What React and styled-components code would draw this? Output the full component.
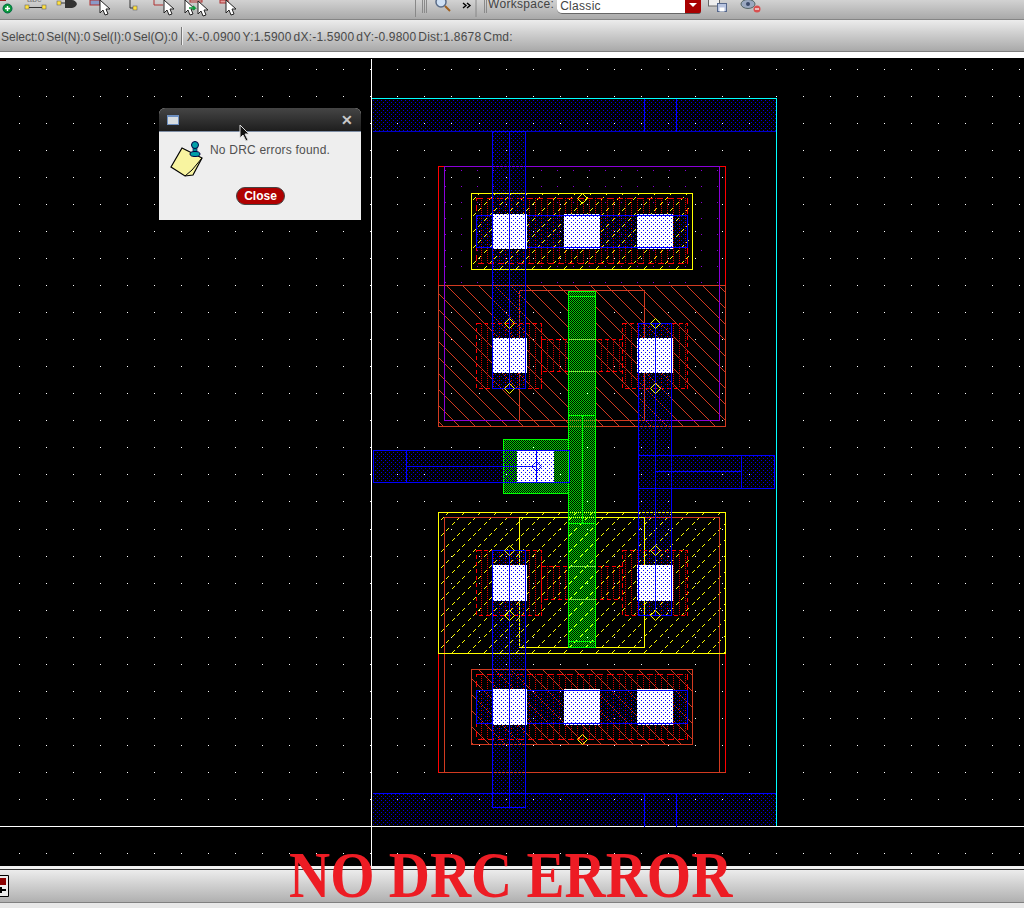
import styled, { createGlobalStyle } from 'styled-components';

const GlobalStyle = createGlobalStyle`
  html, body { margin: 0; padding: 0; background: #e8e8e8; }
  body { font-family: "Liberation Sans", Arial, sans-serif; }
`;

const Page = styled.div`
  position: relative;
  width: 1024px;
  height: 908px;
  overflow: hidden;
  display: flex;
  flex-direction: column;
`;

/* top toolbar, cut off by the top of the window */
const Toolbar = styled.div`
  height: 19px;
  flex: none;
  display: flex;
  align-items: flex-start;
  background: linear-gradient(#d2d2d2, #a9a9a9);
  border-bottom: 1px solid #858585;
`;

const ToolIcons = styled.svg`
  flex: none;
  display: block;
`;

const Workspace = styled.div`
  display: flex;
  align-items: flex-start;
  color: #444;
  font-size: 12px;
  letter-spacing: 0.3px;
  line-height: 12px;
  margin-top: -2px;
`;

const Combo = styled.div`
  width: 128px;
  height: 16px;
  margin-left: 3px;
  padding: 2px 0 0 3px;
  box-sizing: border-box;
  background: #fff;
  border-radius: 0 0 0 5px;
  border-bottom: 1px solid #666;
`;

const ComboArrow = styled.div`
  width: 16px;
  height: 14px;
  background: #a80000;
  border-bottom: 1px solid #555;
  border-radius: 0 0 3px 0;
  display: flex;
  justify-content: center;
  padding-top: 3px;
  box-sizing: border-box;
  &::after {
    content: "";
    border-left: 4px solid transparent;
    border-right: 4px solid transparent;
    border-top: 4px solid #fff;
    height: 0;
  }
`;

const StatusBar = styled.div`
  height: 32px;
  flex: none;
  display: flex;
  align-items: center;
  padding: 2px 0 0 1px;
  box-sizing: border-box;
  color: #4a4a4a;
  font-size: 12px;
  background: linear-gradient(#ececec, #a9a9a9);
  border-bottom: 1px solid #808080;
`;

const StatusGroup = styled.div`
  display: flex;
  gap: 2px;
  letter-spacing: ${(p) => (p.$wide ? '0.2px' : '0')};
`;

const Divider = styled.div`
  width: 1px;
  height: 18px;
  margin: -2px 4px 0 3px;
  background: #777;
  border-right: 1px solid #eee;
`;

const Gap = styled.div`
  height: 6px;
  flex: none;
  background: #fff;
`;

const Canvas = styled.svg`
  display: block;
  flex: none;
  width: 1024px;
  height: 808px;
  background: #000;
`;

const BottomEdge = styled.div`
  height: 4px;
  flex: none;
  box-sizing: border-box;
  background: #f2f2f2;
  border-bottom: 1px solid #333;
`;

const BottomBar = styled.div`
  height: 33px;
  flex: none;
  display: flex;
  align-items: center;
  box-sizing: border-box;
  background: linear-gradient(#ececec, #b0b0b0);
  border-bottom: 1px solid #808080;
`;

const Footer = styled.div`
  flex: 1;
  background: #e8e8e8;
`;

/* the DRC result window over the canvas */
const Dialog = styled.div`
  position: absolute;
  left: 159px;
  top: 108px;
  width: 202px;
  height: 112px;
  background: #eeeeee;
  border-radius: 6px 6px 0 0;
`;

const DialogHead = styled.div`
  height: 24px;
  display: flex;
  align-items: center;
  justify-content: space-between;
  padding: 0 8px;
  box-sizing: border-box;
  border-radius: 6px 6px 0 0;
  background: linear-gradient(#454545, #1e1e1e);
  border-bottom: 1px solid #7e8ea5;
`;

const WinIcon = styled.div`
  width: 12px;
  height: 10px;
  background: #d8dde0;
  border: 1px solid #6d8fc0;
  border-top-width: 2px;
  box-sizing: border-box;
`;

const CloseX = styled.span`
  color: #c8c8c8;
  font-size: 14px;
  font-weight: bold;
  line-height: 14px;
`;

const DialogBody = styled.div`
  display: flex;
  padding: 9px 0 0 11px;
  gap: 7px;
  color: #505050;
  font-size: 12px;
  letter-spacing: 0.2px;
`;

const DialogText = styled.div`
  line-height: 14px;
  margin-top: 2px;
`;

const NoteIcon = styled.svg`
  flex: none;
  overflow: visible;
`;

const CloseButton = styled.button`
  position: absolute;
  left: 77px;
  top: 79px;
  width: 49px;
  height: 18px;
  padding: 0;
  border: 1px solid #444;
  border-radius: 9px;
  background: #b00000;
  color: #fff;
  font: bold 12px "Liberation Sans", Arial, sans-serif;
`;

const Pointer = styled.svg`
  position: absolute;
  left: 239px;
  top: 124px;
`;

const Banner = styled.div`
  position: absolute;
  left: 289px;
  top: 838px;
  color: #ed1c24;
  font-family: "Liberation Serif", "Times New Roman", serif;
  font-weight: bold;
  font-size: 65px;
  line-height: 75px;
  white-space: nowrap;
  transform: scaleX(0.877);
  transform-origin: left center;
`;

const BLUE = '#0000ff';
const RED = '#ff0000';
const ORANGE = '#d23a20';
const YELLOW = '#ffff00';
const GREEN = '#00ff00';
const PURPLE = '#8a00d8';

// outlined box on whole pixels, so it stays as sharp as the layout editor draws it
const Box = ({ x, y, x2, y2, c, fill = 'none', w = 1, dash }) => (
  <rect x={x + 0.5} y={y + 0.5} width={x2 - x} height={y2 - y} fill={fill} stroke={c} strokeWidth={w} strokeDasharray={dash} />
);

const Line = ({ x, y, x2, y2, c, w = 1, dash }) => (
  <line x1={x + 0.5} y1={y + 0.5} x2={x2 + 0.5} y2={y2 + 0.5} stroke={c} strokeWidth={w} strokeDasharray={dash} />
);

const Contact = ({ x, y, x2, y2 }) => (
  <rect x={x} y={y} width={x2 - x} height={y2 - y} fill="url(#contact)" />
);

const Pin = ({ x, y, c = YELLOW }) => (
  <path d={`M${x} ${y - 5}L${x + 5} ${y}L${x} ${y + 5}L${x - 5} ${y}Z`} fill="none" stroke={c} strokeWidth="1" shapeRendering="auto" />
);

const Cursor = ({ x, y }) => (
  <path transform={`translate(${x} ${y})`} d="M0 0v13l3-3 2 5 3-1-2-5h4z" fill="#fff" stroke="#222" strokeWidth="1" />
);

const gridDots = () => {
  let d = '';
  for (let i = 0; i < 38; i++) {
    for (let j = 0; j < 30; j++) {
      const x = Math.round(19 + 27.03 * i);
      const y = Math.round(69 + 27.03 * j);
      d += `M${x} ${y}h1v1h-1z`;
    }
  }
  return d;
};

const purpleDots = () => {
  let d = '';
  for (let x = 445; x < 720; x += 16) {
    for (let y = 170; y < 285; y += 16) d += `M${x} ${y}h1v1h-1z`;
  }
  return d;
};

// yellow hatch as short stair steps, 16px apart
const YELLOW_STEPS = [0, 1, 2, 5, 6, 7, 10, 11, 12];

const Defs = () => (
  <defs>
    <pattern id="metal" width="4" height="4" patternUnits="userSpaceOnUse">
      <rect x="1" y="0" width="1" height="1" fill="#0000e0" />
      <rect x="3" y="2" width="1" height="1" fill="#0000e0" />
    </pattern>
    <pattern id="poly" width="2" height="2" patternUnits="userSpaceOnUse">
      <rect x="1" y="0" width="1" height="1" fill="#00d800" />
      <rect x="0" y="1" width="1" height="1" fill="#00d800" />
    </pattern>
    <pattern id="active" width="6" height="4" patternUnits="userSpaceOnUse">
      <rect x="1" y="0" width="1" height="1" fill="#e00000" />
      <rect x="1" y="2" width="1" height="1" fill="#e00000" />
    </pattern>
    <pattern id="contact" width="4" height="4" patternUnits="userSpaceOnUse">
      <rect width="4" height="4" fill="#fff" />
      <rect x="1" y="0" width="1" height="1" fill={BLUE} />
      <rect x="3" y="2" width="1" height="1" fill={BLUE} />
    </pattern>
    <pattern id="hatchOrange" width="16" height="16" patternUnits="userSpaceOnUse" patternTransform="translate(1 0)">
      <path d="M0 0L16 16" stroke={ORANGE} strokeWidth="1" />
    </pattern>
    <pattern id="hatchYellow" width="16" height="16" patternUnits="userSpaceOnUse">
      {YELLOW_STEPS.map((t) => (
        <rect key={t} x={(16 - t) % 16} y={t} width="1" height="1" fill={YELLOW} />
      ))}
    </pattern>
  </defs>
);

// a transistor's source, channel and drain diffusion with its two contacts
const Device = ({ top, bottom, midTop, midBottom, conTop, conBottom }) => (
  <>
    <rect x="476" y={top} width="66" height={bottom - top} fill="url(#active)" />
    <rect x="622" y={top} width="66" height={bottom - top} fill="url(#active)" />
    <rect x="542" y={midTop} width="80" height={midBottom - midTop} fill="url(#active)" />
    <Box x={476} y={top} x2={541} y2={bottom} c={RED} dash="4 3" />
    <Box x={622} y={top} x2={687} y2={bottom} c={RED} dash="4 3" />
    <Box x={541} y={midTop} x2={622} y2={midBottom} c={RED} dash="4 3" />
    <Contact x={492} y={conTop} x2={527} y2={conBottom} />
    <Contact x={637} y={conTop} x2={673} y2={conBottom} />
  </>
);

// substrate tap: diffusion strip, metal strap and three contacts
const Tap = ({ top, bottom, dashTop, dashBottom, metalTop, metalBottom, pinY, c, hatch }) => (
  <>
    <rect x="471" y={top} width="222" height={bottom - top} fill={`url(#${hatch})`} />
    <rect x="476" y={dashTop} width="212" height={dashBottom - dashTop} fill="url(#active)" />
    <rect x="476" y={metalTop} width="212" height={metalBottom - metalTop} fill="url(#metal)" />
    <Box x={471} y={top} x2={692} y2={bottom} c={c} />
    <Box x={476} y={dashTop} x2={687} y2={dashBottom} c={RED} dash="6 4" />
    <Contact x={492} y={metalTop - 1} x2={527} y2={metalBottom + 2} />
    <Contact x={564} y={metalTop - 1} x2={600} y2={metalBottom + 2} />
    <Contact x={637} y={metalTop - 1} x2={673} y2={metalBottom + 2} />
    <Box x={476} y={metalTop} x2={687} y2={metalBottom} c={BLUE} />
    <Pin x={582.5} y={pinY} />
  </>
);

const Layout = () => (
  <g shapeRendering="crispEdges">
    <path d={gridDots()} fill="#fff" />

    {/* axes */}
    <Line x={371} y={58} x2={371} y2={866} c="#fff" />
    <Line x={-1} y={826} x2={1024} y2={826} c="#fff" />

    {/* power rails */}
    <rect x="372" y="98" width="404" height="33" fill="url(#metal)" />
    <rect x="372" y="793" width="404" height="33" fill="url(#metal)" />
    <Line x={372} y={131} x2={776} y2={131} c="#0000c8" />
    <Line x={372} y={793} x2={776} y2={793} c={BLUE} />
    <Line x={644} y={98} x2={644} y2={131} c={BLUE} />
    <Line x={676} y={98} x2={676} y2={131} c={BLUE} />
    <Line x={644} y={793} x2={644} y2={826} c={BLUE} />
    <Line x={676} y={793} x2={676} y2={826} c={BLUE} />

    {/* upper device: well and hatch */}
    <path d={purpleDots()} fill={PURPLE} />
    <rect x="438" y="285" width="288" height="141" fill="url(#hatchOrange)" />
    <Box x={438} y={166} x2={725} y2={285} c={RED} />
    <Box x={438} y={285} x2={725} y2={426} c={ORANGE} />
    <Box x={444} y={166} x2={719} y2={420} c={PURPLE} />
    <Box x={519} y={290} x2={644} y2={420} c={ORANGE} />

    {/* lower device: well and hatch */}
    <rect x="438" y="512" width="288" height="141" fill="url(#hatchYellow)" />
    <Line x={438} y={653} x2={438} y2={772} c={RED} />
    <Line x={725} y={653} x2={725} y2={772} c={RED} />
    <Line x={438} y={772} x2={725} y2={772} c={ORANGE} />
    <Box x={444} y={517} x2={719} y2={772} c={ORANGE} />
    <Box x={438} y={512} x2={725} y2={653} c={YELLOW} />
    <Box x={519} y={517} x2={644} y2={647} c={YELLOW} />

    <Tap top={193} bottom={269} dashTop={198} dashBottom={263} metalTop={215} metalBottom={247} pinY={198.5} c={YELLOW} hatch="hatchYellow" />
    <Tap top={669} bottom={744} dashTop={674} dashBottom={739} metalTop={690} metalBottom={723} pinY={739.5} c={ORANGE} hatch="hatchOrange" />

    <Device top={323} bottom={388} midTop={339} midBottom={371} conTop={338} conBottom={373} />
    <Device top={550} bottom={615} midTop={566} midBottom={599} conTop={565} conBottom={601} />

    {/* poly gate with its contact */}
    <rect x="503" y="439" width="65" height="55" fill="url(#poly)" />
    <Box x={503} y={439} x2={568} y2={493} c={GREEN} />
    <rect x="568" y="291" width="28" height="356" fill="url(#poly)" />
    <Box x={568} y={291} x2={595} y2={647} c={GREEN} />
    <Line x={568} y={296} x2={595} y2={296} c={GREEN} />
    <Line x={568} y={415} x2={595} y2={415} c={GREEN} />
    <Line x={568} y={523} x2={595} y2={523} c={GREEN} />
    <Line x={568} y={641} x2={595} y2={641} c={GREEN} />
    <Line x={582} y={415} x2={582} y2={523} c={GREEN} />
    <Line x={568} y={339} x2={595} y2={339} c="#80e040" />
    <Line x={568} y={371} x2={595} y2={371} c="#80e040" />
    <Line x={568} y={566} x2={595} y2={566} c="#80e040" />
    <Line x={568} y={599} x2={595} y2={599} c="#80e040" />
    <Contact x={517} y={450} x2={554} y2={483} />

    {/* metal columns */}
    <rect x="492" y="131" width="34" height="258" fill="url(#metal)" />
    <rect x="492" y="550" width="34" height="258" fill="url(#metal)" />
    <rect x="638" y="323" width="34" height="293" fill="url(#metal)" />
    <Contact x={492} y={214} x2={527} y2={248} />
    <Contact x={492} y={338} x2={527} y2={373} />
    <Contact x={492} y={565} x2={527} y2={601} />
    <Contact x={492} y={689} x2={527} y2={724} />
    <Contact x={637} y={338} x2={673} y2={373} />
    <Contact x={637} y={565} x2={673} y2={601} />
    <Box x={492} y={131} x2={525} y2={388} c={BLUE} />
    <Line x={509} y={131} x2={509} y2={388} c={BLUE} />
    <Box x={492} y={550} x2={525} y2={807} c={BLUE} />
    <Line x={509} y={550} x2={509} y2={807} c={BLUE} />
    <Box x={638} y={323} x2={671} y2={615} c={BLUE} />
    <Line x={655} y={323} x2={655} y2={615} c={BLUE} />
    <Pin x={509.5} y={323.5} />
    <Pin x={509.5} y={388.5} />
    <Pin x={655.5} y={323.5} />
    <Pin x={655.5} y={388.5} />
    <Pin x={509.5} y={550.5} />
    <Pin x={509.5} y={615.5} />
    <Pin x={655.5} y={550.5} />
    <Pin x={655.5} y={615.5} />

    {/* gate and output straps */}
    <rect x="373" y="450" width="145" height="33" fill="url(#metal)" />
    <rect x="639" y="455" width="136" height="33" fill="url(#metal)" />
    <Box x={373} y={450} x2={569} y2={482} c={BLUE} />
    <Line x={406} y={450} x2={406} y2={482} c={BLUE} />
    <Line x={406} y={466} x2={536} y2={466} c={BLUE} />
    <Line x={536} y={450} x2={536} y2={482} c={BLUE} />
    <Pin x={536.5} y={466.5} c={BLUE} />
    <Box x={638} y={455} x2={774} y2={488} c={BLUE} />
    <Line x={741} y={455} x2={741} y2={488} c={BLUE} />
    <Line x={655} y={471} x2={741} y2={471} c={BLUE} />

    {/* cell boundary */}
    <path d="M372 98.5H776.5V826" fill="none" stroke="#00ffff" />
  </g>
);

const LeftTools = () => (
  <ToolIcons width="415" height="19" viewBox="0 0 415 19">
    <circle cx="7.5" cy="8.5" r="4.5" fill="#0a9a3a" stroke="#064" />
    <path d="M5 8.5h5M7.5 6v5" stroke="#fff" strokeWidth="1.5" />
    <path d="M0 0h6v1H0z" fill="#a02020" />
    <text x="27" y="2" fontSize="9" fill="#777" fontFamily="Liberation Sans">abc</text>
    <path d="M27 7.5h17" stroke="#333" />
    <rect x="25" y="5" width="4" height="4" fill="#ffe040" stroke="#555" strokeWidth="0.5" />
    <rect x="42" y="5" width="4" height="4" fill="#ffe040" stroke="#555" strokeWidth="0.5" />
    <path d="M57 3h10" stroke="#333" />
    <rect x="57" y="1" width="4" height="4" fill="#ffe040" stroke="#555" strokeWidth="0.5" />
    <path d="M65 0h7a6 8 0 0 1 5 4 6 6 0 0 1-5 4h-7z" fill="#333" />
    <rect x="90" y="0" width="10" height="5" fill="#8a9ac8" stroke="#b03030" />
    <Cursor x={100} y={0} />
    <path d="M130 0v8h4" fill="none" stroke="#333" />
    <rect x="133" y="6" width="4" height="4" fill="#ffe040" stroke="#555" strokeWidth="0.5" />
    <path d="M154 0v5h9" fill="none" stroke="#b03030" />
    <Cursor x={164} y={0} />
    <rect x="190" y="0" width="12" height="2" fill="none" stroke="#b03030" />
    <Cursor x={185} y={0} />
    <Cursor x={198} y={1} />
    <path d="M189 8h6l-2-2M195 8l-2 2" fill="none" stroke="#0a9a3a" strokeWidth="1.5" />
    <rect x="220" y="0" width="8" height="3" fill="#e0a0a0" stroke="#b03030" />
    <Cursor x={226} y={0} />
  </ToolIcons>
);

const SearchTools = () => (
  <ToolIcons width="73" height="19" viewBox="0 0 73 19">
    <path d="M0 0v17h1V0z" fill="#888" />
    <path d="M7.5 0v13M9.5 0v13M11.5 0v13" stroke="#8a8a8a" />
    <circle cx="26" cy="2" r="5" fill="#cfe0f4" stroke="#5a6c88" strokeWidth="1.5" />
    <path d="M30 6l5 5" stroke="#a06020" strokeWidth="2" />
    <path d="M48 3l3 2.5-3 2.5M52 3l3 2.5-3 2.5" fill="none" stroke="#000" strokeWidth="1.4" />
    <path d="M61 0v17" stroke="#888" />
    <path d="M69.5 0v13M71.5 0v13" stroke="#8a8a8a" />
  </ToolIcons>
);

const RightTools = () => (
  <ToolIcons width="70" height="19" viewBox="0 0 70 19">
    <rect x="7.5" y="-1" width="11" height="7" fill="#eee" stroke="#666" />
    <rect x="16.5" y="3.5" width="9" height="8" fill="#b8c4e0" stroke="#56688c" />
    <rect x="18.5" y="7.5" width="5" height="4" fill="#fff" />
    <ellipse cx="47" cy="4" rx="7" ry="4.5" fill="#9aa8c0" stroke="#566" />
    <circle cx="47" cy="4" r="2" fill="#3a4a6a" />
    <circle cx="56" cy="9" r="3.5" fill="#d85050" />
    <path d="M54 9h4" stroke="#fff" strokeWidth="1.2" />
  </ToolIcons>
);

const App = () => (
  <Page>
    <GlobalStyle />
    <Toolbar>
      <LeftTools />
      <SearchTools />
      <Workspace>Workspace:<Combo>Classic</Combo></Workspace>
      <ComboArrow />
      <RightTools />
    </Toolbar>
    <StatusBar>
      <StatusGroup>
        <span>Select:0</span>
        <span>Sel(N):0</span>
        <span>Sel(I):0</span>
        <span>Sel(O):0</span>
      </StatusGroup>
      <Divider />
      <StatusGroup $wide>
        <span>X:-0.0900</span>
        <span>Y:1.5900</span>
        <span>dX:-1.5900</span>
        <span>dY:-0.9800</span>
        <span>Dist:1.8678</span>
        <span>Cmd:</span>
      </StatusGroup>
    </StatusBar>
    <Gap />
    <Canvas viewBox="0 58 1024 808">
      <Defs />
      <Layout />
    </Canvas>
    <BottomEdge />
    <BottomBar>
      <svg width="9" height="22" viewBox="0 0 9 22">
        <path d="M0 .5H8.5V21.5H0" fill="#ececec" stroke="#000" />
        <rect x="0" y="3" width="6" height="7" fill="#8a0000" />
        <path d="M0 12h2v6H0zM2 14h4v2H2z" fill="#000" />
      </svg>
    </BottomBar>
    <Footer />

    <Dialog>
      <DialogHead>
        <WinIcon />
        <CloseX>✕</CloseX>
      </DialogHead>
      <DialogBody>
        <NoteIcon width="33" height="33" viewBox="0 0 33 33">
          <path d="M12 7L32 17 23 34 15 35 1 26Z" fill="#f8f4a0" stroke="#000" strokeWidth="1.2" />
          <path d="M15 35L22 29 32 17" fill="none" stroke="#000" />
          <rect x="23" y="5" width="4" height="8" fill="#008890" stroke="#004" strokeWidth="0.6" />
          <circle cx="25" cy="4" r="3.5" fill="#00a0a8" stroke="#004" />
          <ellipse cx="25" cy="13" rx="5" ry="2.5" fill="#00a0a8" stroke="#004" />
        </NoteIcon>
        <DialogText>No DRC errors found.</DialogText>
      </DialogBody>
      <CloseButton>Close</CloseButton>
    </Dialog>

    <Pointer width="12" height="18" viewBox="0 0 12 18">
      <path d="M1 1v13l3-3 3 6 2-1-3-6h4z" fill="#111" stroke="#ddd" strokeWidth="1" />
    </Pointer>

    <Banner>NO DRC ERROR</Banner>
  </Page>
);

export default App;
